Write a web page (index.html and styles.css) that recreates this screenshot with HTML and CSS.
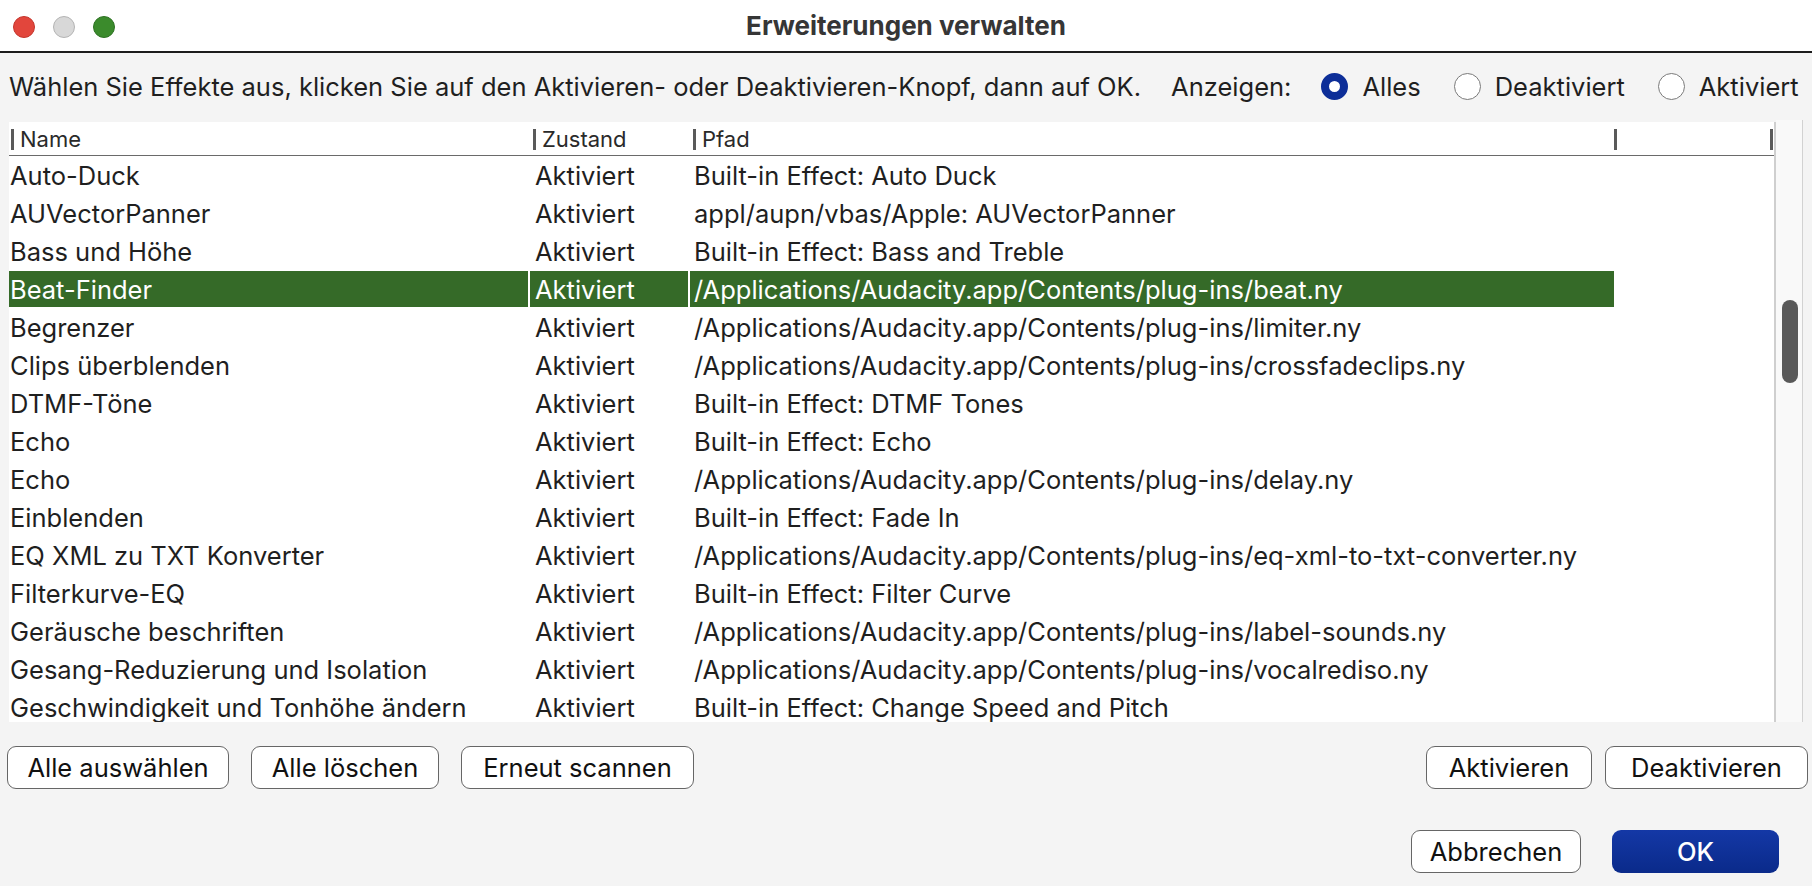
FILE: index.html
```html
<!DOCTYPE html>
<html lang="de">
<head>
<meta charset="utf-8">
<title>Erweiterungen verwalten</title>
<link rel="stylesheet" href="styles.css">
</head>
<body>
<div class="window">
  <div class="titlebar">
    <div class="lights">
      <span class="light red"></span>
      <span class="light gray"></span>
      <span class="light green"></span>
    </div>
    <div class="title">Erweiterungen verwalten</div>
  </div>

  <div class="toprow">
    <span class="instr">Wählen Sie Effekte aus, klicken Sie auf den Aktivieren- oder Deaktivieren-Knopf, dann auf OK.</span>
    <span class="show">Anzeigen:</span>
    <span class="radio"><span class="dot checked"></span>Alles</span>
    <span class="radio"><span class="dot"></span>Deaktiviert</span>
    <span class="radio"><span class="dot"></span>Aktiviert</span>
  </div>

  <div class="tablewrap">
    <div class="table">
      <div class="thead">
        <div class="th"><span class="thl">Name</span></div>
        <div class="th"><span class="thl">Zustand</span></div>
        <div class="th"><span class="thl">Pfad</span></div>
        <div class="th last"><span class="thl"></span></div>
      </div>
      <div class="rows">
        <div class="row"><div class="c1">Auto-Duck</div><div class="c2">Aktiviert</div><div class="c3">Built-in Effect: Auto Duck</div><div class="c4"></div></div>
        <div class="row"><div class="c1">AUVectorPanner</div><div class="c2">Aktiviert</div><div class="c3">appl/aupn/vbas/Apple: AUVectorPanner</div><div class="c4"></div></div>
        <div class="row"><div class="c1">Bass und Höhe</div><div class="c2">Aktiviert</div><div class="c3">Built-in Effect: Bass and Treble</div><div class="c4"></div></div>
        <div class="row sel"><div class="c1">Beat-Finder</div><div class="c2">Aktiviert</div><div class="c3">/Applications/Audacity.app/Contents/plug-ins/beat.ny</div><div class="c4"></div></div>
        <div class="row"><div class="c1">Begrenzer</div><div class="c2">Aktiviert</div><div class="c3">/Applications/Audacity.app/Contents/plug-ins/limiter.ny</div><div class="c4"></div></div>
        <div class="row"><div class="c1">Clips überblenden</div><div class="c2">Aktiviert</div><div class="c3">/Applications/Audacity.app/Contents/plug-ins/crossfadeclips.ny</div><div class="c4"></div></div>
        <div class="row"><div class="c1">DTMF-Töne</div><div class="c2">Aktiviert</div><div class="c3">Built-in Effect: DTMF Tones</div><div class="c4"></div></div>
        <div class="row"><div class="c1">Echo</div><div class="c2">Aktiviert</div><div class="c3">Built-in Effect: Echo</div><div class="c4"></div></div>
        <div class="row"><div class="c1">Echo</div><div class="c2">Aktiviert</div><div class="c3">/Applications/Audacity.app/Contents/plug-ins/delay.ny</div><div class="c4"></div></div>
        <div class="row"><div class="c1">Einblenden</div><div class="c2">Aktiviert</div><div class="c3">Built-in Effect: Fade In</div><div class="c4"></div></div>
        <div class="row"><div class="c1">EQ XML zu TXT Konverter</div><div class="c2">Aktiviert</div><div class="c3">/Applications/Audacity.app/Contents/plug-ins/eq-xml-to-txt-converter.ny</div><div class="c4"></div></div>
        <div class="row"><div class="c1">Filterkurve-EQ</div><div class="c2">Aktiviert</div><div class="c3">Built-in Effect: Filter Curve</div><div class="c4"></div></div>
        <div class="row"><div class="c1">Geräusche beschriften</div><div class="c2">Aktiviert</div><div class="c3">/Applications/Audacity.app/Contents/plug-ins/label-sounds.ny</div><div class="c4"></div></div>
        <div class="row"><div class="c1">Gesang-Reduzierung und Isolation</div><div class="c2">Aktiviert</div><div class="c3">/Applications/Audacity.app/Contents/plug-ins/vocalrediso.ny</div><div class="c4"></div></div>
        <div class="row"><div class="c1">Geschwindigkeit und Tonhöhe ändern</div><div class="c2">Aktiviert</div><div class="c3">Built-in Effect: Change Speed and Pitch</div><div class="c4"></div></div>
      </div>
    </div>
    <div class="scrollbar"><div class="thumb"></div></div>
  </div>

  <div class="btnrow">
    <div class="group">
      <span class="btn w-all">Alle auswählen</span>
      <span class="btn w-clear">Alle löschen</span>
      <span class="btn w-scan">Erneut scannen</span>
    </div>
    <div class="group right1">
      <span class="btn w-on">Aktivieren</span>
      <span class="btn w-off">Deaktivieren</span>
    </div>
  </div>

  <div class="btnrow2">
    <span class="btn w-cancel">Abbrechen</span>
    <span class="btn ok w-ok">OK</span>
  </div>
</div>
</body>
</html>
```

FILE: styles.css
```css
* { box-sizing: border-box; }
html, body { margin: 0; padding: 0; }
body {
  width: 1812px;
  height: 886px;
  overflow: hidden;
  background: #f4f4f4;
  font-family: "Inter", "Noto Sans", sans-serif;
  color: #1f1f1f;
}
.window { width: 1812px; height: 886px; display: flex; flex-direction: column; }

.titlebar {
  height: 53px;
  flex: none;
  background: #ffffff;
  border-bottom: 2px solid #1c1c1c;
  display: flex;
  align-items: center;
  position: relative;
}
.lights { display: flex; gap: 18px; padding-left: 13px; margin-top: 2px; }
.light { width: 22px; height: 22px; border-radius: 50%; display: block; }
.light.red { background: #e2463c; border: 1px solid #c4352c; }
.light.gray { background: #d8d8d8; border: 1px solid #b4b4b4; }
.light.green { background: #3b8b2c; border: 1px solid #2d7222; }
.title {
  position: absolute;
  left: 0; right: 0; top: 0; bottom: 0;
  display: flex; align-items: center; justify-content: center;
  font-weight: 700;
  font-size: 26px;
  color: #363636;
  pointer-events: none;
}

.toprow {
  height: 69px;
  flex: none;
  display: flex;
  align-items: center;
  padding-left: 9px;
  font-size: 25.5px;
  color: #1f1f1f;
  padding-bottom: 2px;
  white-space: nowrap;
}
.instr { margin-right: 30px; }
.show { margin-right: 30px; }
.radio { display: flex; align-items: center; margin-right: 33px; }
.dot {
  width: 27px; height: 27px; border-radius: 50%;
  background: #ffffff;
  border: 1.5px solid #7a7a7a;
  margin-right: 14px;
  display: inline-block;
  flex: none;
}
.dot.checked { border: 8px solid #0d2e98; background: #ffffff; }

.tablewrap {
  display: flex;
  height: 600px;
  flex: none;
  margin-left: 9px;
  width: 1795px;
}
.table {
  width: 1767px;
  background: #ffffff;
  border-right: 2px solid #cfcfcf;
  overflow: hidden;
  display: flex;
  flex-direction: column;
}
.thead {
  height: 34px;
  flex: none;
  display: grid;
  grid-template-columns: 521px 160px 924px 1fr;
  border-bottom: 1px solid #6a6a6a;
  font-size: 22px;
  color: #2a2a2a;
  align-items: center;
  padding-top: 2px;
}
.th { padding-left: 2px; display: flex; align-items: center; }
.th + .th { padding-left: 3px; }
.thl {
  border-left: 3px solid #5a5a5a;
  padding-left: 6px;
  height: 21px;
  line-height: 21px;
  display: block;
}
.th.last { justify-content: space-between; padding-left: 0; padding-right: 1px; }
.th.last::after {
  content: "";
  width: 3px; height: 21px; background: #5a5a5a; display: block;
}
.rows { flex: 1; overflow: hidden; }
.row {
  display: grid;
  grid-template-columns: 521px 160px 924px 1fr;
  height: 38px;
  align-items: stretch;
  font-size: 25.5px;
  color: #1f1f1f;
}
.row > div { display: flex; align-items: center; white-space: nowrap; }
.c1 { padding-left: 1px; }
.c2 { padding-left: 5px; }
.c3 { padding-left: 4px; }
.row.sel .c1, .row.sel .c2, .row.sel .c3 {
  background: #356a28;
  color: #ffffff;
  margin: 1px 0;
}
.row.sel .c1, .row.sel .c2 { border-right: 2px solid #ffffff; }

.scrollbar {
  width: 27px;
  background: #f9f9f9;
  border-right: 1px solid #d2d2d2;
  position: relative;
  margin-top: -2px;
}
.thumb {
  position: absolute;
  left: 6px;
  top: 180px;
  width: 16px;
  height: 83px;
  border-radius: 8px;
  background: #595959;
}

.btn {
  display: flex; align-items: center; justify-content: center;
  height: 43px;
  background: #ffffff;
  border: 1.5px solid #666666;
  border-radius: 9px;
  font-size: 25.5px;
  color: #111111;
  white-space: nowrap;
}
.btnrow {
  display: flex;
  justify-content: space-between;
  margin-top: 24px;
  padding: 0 4px 0 7px;
}
.group { display: flex; gap: 22px; }
.group.right1 { gap: 13px; }
.btnrow2 {
  display: flex;
  justify-content: flex-end;
  gap: 31px;
  margin-top: 41px;
  padding-right: 33px;
}
.w-all { width: 222px; }
.w-clear { width: 188px; }
.w-scan { width: 233px; }
.w-on { width: 166px; }
.w-off { width: 203px; }
.w-cancel { width: 170px; }
.w-ok { width: 167px; }
.btn.ok {
  border: none;
  background: linear-gradient(#1438a6, #0a2a8a);
  color: #ffffff;
  font-weight: 500;
}
```
